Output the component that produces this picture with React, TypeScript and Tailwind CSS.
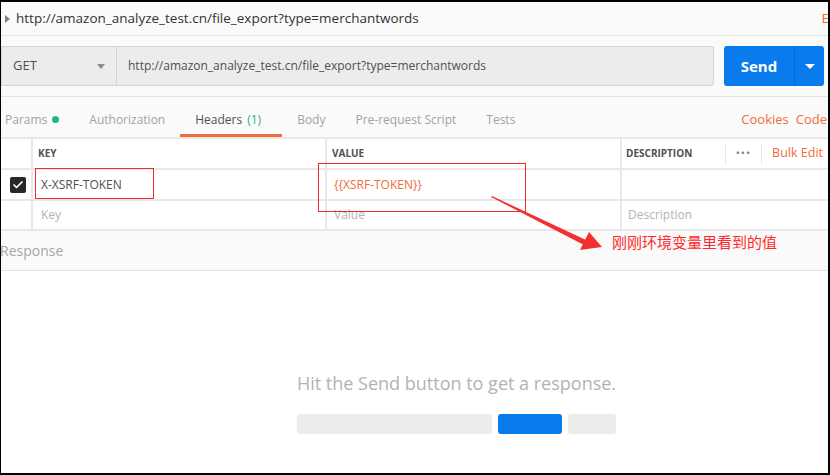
import { Check } from "lucide-react";

const font = "font-['Open_Sans','Noto_Sans_CJK_SC',sans-serif]";

// 요청 탭 목록
const tabs = [
  { label: "Params", dot: true },
  { label: "Authorization" },
  { label: "Headers", count: "(1)", active: true },
  { label: "Body" },
  { label: "Pre-request Script" },
  { label: "Tests" },
];

function TabBar() {
  return (
    <div className="flex h-[40px] items-stretch bg-[#fafafa] text-[12px]">
      <div className="flex items-stretch">
        {tabs.map((tab, index) => (
          <div
            key={index}
            className={`relative flex items-center pl-[15px] pt-[5px] first:pl-[4px] ${
              tab.active ? "pr-[21px] text-[#505050]" : "pr-[15px] text-[#a3a3a3]"
            }`}
          >
            {tab.label}
            {tab.dot && (
              <span className="ml-[5px] inline-block h-[7px] w-[7px] rounded-full bg-[#26b47f]" />
            )}
            {tab.count && <span className="ml-[5px] text-[#26b47f]">{tab.count}</span>}
            {tab.active && (
              <span className="absolute bottom-0 left-0 right-0 h-[3px] bg-[#f26b3a]" />
            )}
          </div>
        ))}
      </div>
      <div className="ml-auto flex items-center gap-[7px] pr-[1px] pt-[5px] text-[13px] text-[#f26b3a]">
        <span>Cookies</span>
        <span>Code</span>
      </div>
    </div>
  );
}

function HeaderTable() {
  return (
    <div className="border-y-2 border-[#e8e8e8] bg-white text-[12px]">
      {/* 헤더 행 */}
      <div className="flex h-[31px] items-stretch border-b-2 border-[#e8e8e8]">
        <div className="w-[32px] border-r-2 border-[#e8e8e8]" />
        <div className="flex w-[294px] items-center border-r-2 border-[#e8e8e8] pl-[5px] text-[10px] font-bold text-[#505050]">
          KEY
        </div>
        <div className="flex w-[295px] items-center border-r-2 border-[#e8e8e8] pl-[5px] text-[10px] font-bold text-[#505050]">
          VALUE
        </div>
        <div className="flex flex-1 items-center pl-[4px]">
          <span className="text-[10px] font-bold text-[#505050]">DESCRIPTION</span>
          <div className="ml-auto flex h-[20px] items-center">
            <span className="flex h-full items-center border-l border-[#e6e6e6] px-[10px] text-[11px] tracking-[1px] text-[#808080]">
              •••
            </span>
            <span className="flex h-full items-center border-l border-[#e6e6e6] pl-[10px] pr-[5px] text-[12.5px] text-[#f26b3a]">
              Bulk Edit
            </span>
          </div>
        </div>
      </div>
      {/* 데이터 행 */}
      <div className="flex h-[31px] items-stretch border-b-2 border-[#e8e8e8]">
        <div className="flex w-[32px] items-center justify-center border-r-2 border-[#e8e8e8] pl-[4px]">
          <span className="flex h-[16px] w-[16px] items-center justify-center rounded-[2px] bg-[#282828]">
            <Check size={12} strokeWidth={3.5} color="#ffffff" />
          </span>
        </div>
        <div className="flex w-[294px] items-center border-r-2 border-[#e8e8e8] pl-[8px] text-[#505050]">
          X-XSRF-TOKEN
        </div>
        <div className="flex w-[295px] items-center border-r-2 border-[#e8e8e8] pl-[7px] text-[#f26b3a]">
          {"{{XSRF-TOKEN}}"}
        </div>
        <div className="flex-1" />
      </div>
      {/* 빈 행 */}
      <div className="flex h-[28px] items-stretch text-[#b3b3b3]">
        <div className="w-[32px] border-r-2 border-[#e8e8e8]" />
        <div className="flex w-[294px] items-center border-r-2 border-[#e8e8e8] pl-[8px]">Key</div>
        <div className="flex w-[295px] items-center border-r-2 border-[#e8e8e8] pl-[7px]">Value</div>
        <div className="flex flex-1 items-center pl-[6px]">Description</div>
      </div>
    </div>
  );
}

function Annotations() {
  return (
    <>
      <div className="absolute left-[34px] top-[166px] h-[31px] w-[119px] border border-[#ee2c2c]" />
      <div className="absolute left-[317px] top-[161px] h-[49px] w-[208px] border border-[#ee2c2c]" />
      <svg className="absolute left-0 top-0" width="830" height="475">
        <polygon points="491,194 585,238 583,243 490,195" fill="#f23030" />
        <polygon points="601,245 579,248 588,230" fill="#f23030" />
      </svg>
      <div className="absolute left-[611px] top-[230px] font-['Noto_Sans_CJK_SC',sans-serif] text-[15px] leading-[20px] text-[#ff2a2a]">
        刚刚环境变量里看到的值
      </div>
    </>
  );
}

export default function App() {
  return (
    <div
      className={`relative h-[475px] w-[830px] overflow-hidden border-b-2 border-l border-r-2 border-t-2 border-black bg-white ${font}`}
    >
      {/* 요청 제목 */}
      <div className="flex h-[34px] items-center border-b border-[#e3e3e3] bg-[#fafafa] text-[13.5px] text-[#333333]">
        <span className="ml-[4px] mr-[6px] inline-block h-0 w-0 border-y-[4px] border-l-[5px] border-y-transparent border-l-[#808080]" />
        <span>http://amazon_analyze_test.cn/file_export?type=merchantwords</span>
        <span className="ml-auto mr-[-8px] text-[#f26b3a]">Ex</span>
      </div>

      {/* 요청 URL 바 */}
      <div className="flex items-stretch border-b border-[#e3e3e3] bg-[#fafafa] pb-[10px] pl-0 pr-[4px] pt-[10px]">
        <div className="flex h-[40px] w-[116px] items-center justify-between border border-[#d4d4d4] bg-[#ececec] pl-[11px] pr-[11px] text-[13px] text-[#505050]">
          GET
          <span className="inline-block h-0 w-0 border-x-[4px] border-t-[5px] border-x-transparent border-t-[#8c8c8c]" />
        </div>
        <div className="flex h-[40px] w-[597px] items-center rounded-r-[3px] border border-l-0 border-[#d4d4d4] bg-[#ececec] pl-[11px] text-[12px] text-[#505050]">
          http://amazon_analyze_test.cn/file_export?type=merchantwords
        </div>
        <div className="ml-[10px] flex h-[40px] w-[100px] items-stretch rounded-[3px] bg-[#097bed] text-white">
          <div className="flex flex-1 items-center justify-center text-[15px] font-bold">Send</div>
          <div className="flex w-[30px] items-center justify-center border-l border-[#0a6ad0]">
            <span className="inline-block h-0 w-0 border-x-[5px] border-t-[5px] border-x-transparent border-t-white" />
          </div>
        </div>
      </div>

      <TabBar />
      <HeaderTable />

      {/* 응답 영역 */}
      <div className="flex h-[40px] items-center border-b border-[#e3e3e3] bg-[#fafafa] text-[14px] text-[#a6a6a6]">
        <span className="-ml-[1px]">Response</span>
      </div>

      <div className="flex flex-col items-center pl-[84px] pt-[99px]">
        <div className="text-[18px] text-[#b3b3b3]">Hit the Send button to get a response.</div>
        <div className="mt-[17px] flex gap-[6px]">
          <div className="h-[20px] w-[195px] rounded-[3px] bg-[#ececec]" />
          <div className="h-[20px] w-[64px] rounded-[3px] bg-[#097bed]" />
          <div className="h-[20px] w-[48px] rounded-[3px] bg-[#ececec]" />
        </div>
      </div>

      <Annotations />
    </div>
  );
}
